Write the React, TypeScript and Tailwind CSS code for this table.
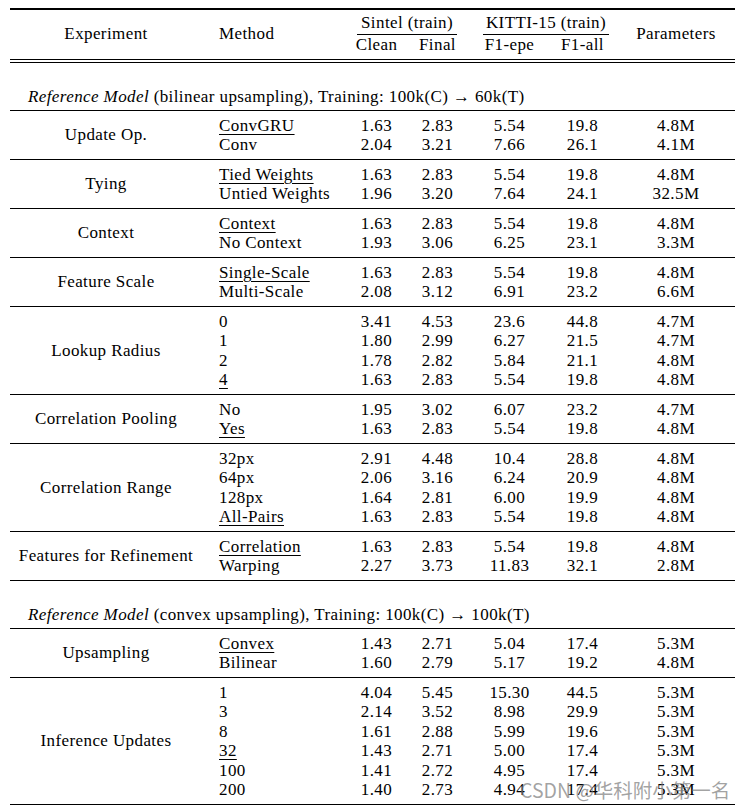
import React from "react";

type Row = { m: string; u?: boolean; v: string[] };
type Group = { label: string; rows: Row[] };

const section1: Group[] = [
  {
    label: "Update Op.",
    rows: [
      { m: "ConvGRU", u: true, v: ["1.63", "2.83", "5.54", "19.8", "4.8M"] },
      { m: "Conv", v: ["2.04", "3.21", "7.66", "26.1", "4.1M"] },
    ],
  },
  {
    label: "Tying",
    rows: [
      { m: "Tied Weights", u: true, v: ["1.63", "2.83", "5.54", "19.8", "4.8M"] },
      { m: "Untied Weights", v: ["1.96", "3.20", "7.64", "24.1", "32.5M"] },
    ],
  },
  {
    label: "Context",
    rows: [
      { m: "Context", u: true, v: ["1.63", "2.83", "5.54", "19.8", "4.8M"] },
      { m: "No Context", v: ["1.93", "3.06", "6.25", "23.1", "3.3M"] },
    ],
  },
  {
    label: "Feature Scale",
    rows: [
      { m: "Single-Scale", u: true, v: ["1.63", "2.83", "5.54", "19.8", "4.8M"] },
      { m: "Multi-Scale", v: ["2.08", "3.12", "6.91", "23.2", "6.6M"] },
    ],
  },
  {
    label: "Lookup Radius",
    rows: [
      { m: "0", v: ["3.41", "4.53", "23.6", "44.8", "4.7M"] },
      { m: "1", v: ["1.80", "2.99", "6.27", "21.5", "4.7M"] },
      { m: "2", v: ["1.78", "2.82", "5.84", "21.1", "4.8M"] },
      { m: "4", u: true, v: ["1.63", "2.83", "5.54", "19.8", "4.8M"] },
    ],
  },
  {
    label: "Correlation Pooling",
    rows: [
      { m: "No", v: ["1.95", "3.02", "6.07", "23.2", "4.7M"] },
      { m: "Yes", u: true, v: ["1.63", "2.83", "5.54", "19.8", "4.8M"] },
    ],
  },
  {
    label: "Correlation Range",
    rows: [
      { m: "32px", v: ["2.91", "4.48", "10.4", "28.8", "4.8M"] },
      { m: "64px", v: ["2.06", "3.16", "6.24", "20.9", "4.8M"] },
      { m: "128px", v: ["1.64", "2.81", "6.00", "19.9", "4.8M"] },
      { m: "All-Pairs", u: true, v: ["1.63", "2.83", "5.54", "19.8", "4.8M"] },
    ],
  },
  {
    label: "Features for Refinement",
    rows: [
      { m: "Correlation", u: true, v: ["1.63", "2.83", "5.54", "19.8", "4.8M"] },
      { m: "Warping", v: ["2.27", "3.73", "11.83", "32.1", "2.8M"] },
    ],
  },
];

const section2: Group[] = [
  {
    label: "Upsampling",
    rows: [
      { m: "Convex", u: true, v: ["1.43", "2.71", "5.04", "17.4", "5.3M"] },
      { m: "Bilinear", v: ["1.60", "2.79", "5.17", "19.2", "4.8M"] },
    ],
  },
  {
    label: "Inference Updates",
    rows: [
      { m: "1", v: ["4.04", "5.45", "15.30", "44.5", "5.3M"] },
      { m: "3", v: ["2.14", "3.52", "8.98", "29.9", "5.3M"] },
      { m: "8", v: ["1.61", "2.88", "5.99", "19.6", "5.3M"] },
      { m: "32", u: true, v: ["1.43", "2.71", "5.00", "17.4", "5.3M"] },
      { m: "100", v: ["1.41", "2.72", "4.95", "17.4", "5.3M"] },
      { m: "200", v: ["1.40", "2.73", "4.94", "17.4", "5.3M"] },
    ],
  },
];

// widths of the value columns, spacer sits between Final and F1-epe
const valueCols = ["w-[61px]", "w-[61px] mr-[5px]", "w-[73px]", "w-[73px]", "w-[114px]"];

function GroupBlock({ g }: { g: Group }) {
  return (
    <div className="flex border-b border-black py-[4.5px]">
      <div className="flex w-[192px] items-center justify-center">{g.label}</div>
      <div className="flex flex-col">
        {g.rows.map((r, i) => (
          <div key={i} className="flex h-[19.5px] items-center">
            <div className="w-[144px] pl-[17px]">
              <span className={r.u ? "underline decoration-1 underline-offset-[3px]" : ""}>{r.m}</span>
            </div>
            {r.v.map((v, j) => (
              <div key={j} className={`${valueCols[j]} text-center`}>
                {v}
              </div>
            ))}
          </div>
        ))}
      </div>
    </div>
  );
}

function Caption({ kind, target }: { kind: string; target: string }) {
  return (
    <div className="flex h-[48px] items-end border-b border-black pb-[4px] pl-[18px] leading-[19.5px]">
      <span>
        <i>Reference Model</i> ({kind} upsampling), Training: 100k(C) → {target}(T)
      </span>
    </div>
  );
}

export default function App() {
  return (
    <div className="relative h-[810px] w-[743px] bg-white font-['Liberation_Serif','Times_New_Roman',serif] text-[17px] leading-[19.5px] tracking-[0.4px] text-black">
      <div className="mx-[10px] w-[725px] pt-[8px]">
        <div className="h-[1.5px] bg-black" />

        {/* header */}
        <div className="flex h-[49px]">
          <div className="flex w-[192px] items-center justify-center">Experiment</div>
          <div className="flex w-[144px] items-center pl-[17px]">Method</div>
          <div className="flex w-[122px] flex-col pt-[3px]">
            <div className="h-[19.5px] text-center">Sintel (train)</div>
            <div className="mx-[11px] mt-[1.5px] border-b border-black" />
            <div className="flex">
              <div className="w-[61px] text-center">Clean</div>
              <div className="w-[61px] text-center">Final</div>
            </div>
          </div>
          <div className="w-[5px]" />
          <div className="flex w-[146px] flex-col pt-[3px]">
            <div className="h-[19.5px] text-center">KITTI-15 (train)</div>
            <div className="mx-[10px] mt-[1.5px] border-b border-black" />
            <div className="flex">
              <div className="w-[73px] text-center">F1-epe</div>
              <div className="w-[73px] text-center">F1-all</div>
            </div>
          </div>
          <div className="flex w-[114px] items-center justify-center">Parameters</div>
        </div>
        <div className="h-[1.5px] bg-black" />
        <div className="h-[2px]" />
        <div className="h-px bg-black" />

        <Caption kind="bilinear" target="60k" />
        {section1.map((g) => (
          <GroupBlock key={g.label} g={g} />
        ))}

        <Caption kind="convex" target="100k" />
        {section2.map((g) => (
          <GroupBlock key={g.label} g={g} />
        ))}
      </div>

      <div className="absolute left-[520px] top-[777px] whitespace-nowrap font-['Noto_Sans_CJK_SC','Noto_Sans',sans-serif] text-[19.5px] leading-[26px] tracking-normal text-[#7a7a7a]/70">
        CSDN @华科附小第一名
      </div>
    </div>
  );
}
